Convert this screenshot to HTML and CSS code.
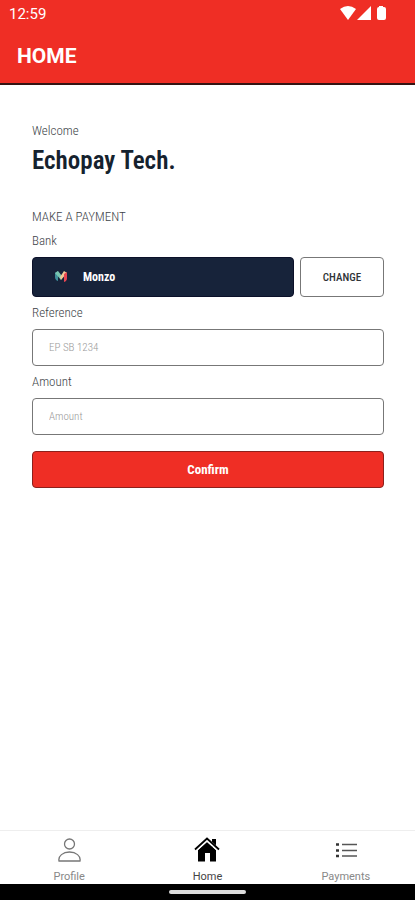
FILE: index.html
```html
<!DOCTYPE html>
<html lang="en">
<head>
<meta charset="utf-8">
<meta name="viewport" content="width=device-width, initial-scale=1">
<title>Home</title>
<link rel="stylesheet" href="styles.css">
</head>
<body>
<header class="header">
  <div class="status">
    <time>12:59</time>
    <svg class="status-icons" width="48" height="16" viewBox="0 0 48 16" fill="#fff" aria-hidden="true">
      <path d="M0 4Q8-2 16 4L8 15Z"/>
      <path d="M31 1V15H17Z"/>
      <path d="M39 1h4v1h1q2 0 2 2v9q0 2-2 2h-5q-2 0-2-2V4q0-2 2-2Z"/>
    </svg>
  </div>
  <h1 class="title">HOME</h1>
</header>
<main class="content">
  <p class="label">Welcome</p>
  <h2 class="name">Echopay Tech.</h2>
  <form class="form">
    <h3 class="label section">MAKE A PAYMENT</h3>
    <p class="label field-label">Bank</p>
    <div class="bank-row">
      <button type="button" class="bank">
        <svg width="14" height="12" viewBox="0 0 14 12" aria-hidden="true">
          <path d="M1 2L4 0V10Q1 9 1 6Z" fill="#3f8f9b"/>
          <path d="M1 2L4 0L8 5L7 9Z" fill="#79c6b0"/>
          <path d="M6 6L10 0L13 2L7 9Z" fill="#f3c997"/>
          <path d="M10 3L13 1V7Q13 10 10 11Z" fill="#e94652"/>
        </svg>
        <span>Monzo</span>
      </button>
      <button type="button" class="change">CHANGE</button>
    </div>
    <label class="label field-label" for="reference">Reference</label>
    <input class="input" id="reference" type="text" placeholder="EP SB 1234">
    <label class="label field-label" for="amount">Amount</label>
    <input class="input" id="amount" type="text" inputmode="decimal" placeholder="Amount">
    <button type="submit" class="confirm">Confirm</button>
  </form>
</main>
<nav class="tabs">
  <a class="tab" href="#profile">
    <svg width="24" height="26" viewBox="0 0 24 26" fill="none" stroke="#777" stroke-width="1.3" aria-hidden="true">
      <circle cx="12.500" cy="7" r="5"/>
      <path d="M2 24C1 19 6 15 12.500 15S24 19 23 24Z" stroke-linejoin="round"/>
    </svg>
    <span>Profile</span>
  </a>
  <a class="tab active" href="#home" aria-current="page">
    <svg width="26" height="26" viewBox="0 0 26 26" aria-hidden="true">
      <path d="M18 2h4v8h-4ZM4 13L13 5L22 13V24.500H16V16H11V24.500H4Z" fill="#000"/>
      <path d="M1 13.500L13 2.500L25 13.500" fill="none" stroke="#fff" stroke-width="3.500"/>
      <path d="M1 12.500L13 1.500L25 12.500" fill="none" stroke="#000" stroke-width="1.800"/>
    </svg>
    <span>Home</span>
  </a>
  <a class="tab" href="#payments">
    <svg width="24" height="26" viewBox="0 0 24 26" aria-hidden="true">
      <path d="M8 7.500h15M8 13.500h15M8 19h15" stroke="#555" stroke-width="1.300"/>
      <path d="M2 7.500h3M2 13.500h3M2 19h3" stroke="#333" stroke-width="2.600"/>
    </svg>
    <span>Payments</span>
  </a>
</nav>
<footer class="system"><div class="handle"></div></footer>
</body>
</html>
```
FILE: styles.css
```css
* { box-sizing: border-box; }
body {
  margin: 0;
  min-height: 100vh;
  display: flex;
  flex-direction: column;
  background: #fff;
  color: #3d4348;
  font-family: "Roboto Condensed", "Liberation Sans Narrow", Roboto, sans-serif;
}
h1, h2, h3, p { margin: 0; }
button, input { font: inherit; }
.header {
  background: #ef2e25;
  border-bottom: 2px solid #351413;
  color: #fff;
  font-family: Roboto, sans-serif;
}
.status {
  display: flex;
  justify-content: space-between;
  align-items: center;
  height: 28px;
  padding: 0 27px 0 9px;
  font-size: 15px;
}
.status-icons { margin-bottom: 2px; }
.title {
  padding: 2px 17px 0;
  font-size: 21px;
  line-height: 53px;
  font-weight: 700;
}
.content {
  flex: 1;
  padding: 36px 31px 0 32px;
}
.label {
  display: block;
  font-size: 13px;
  line-height: 20px;
  font-weight: 300;
}
.name {
  margin-bottom: 28px;
  font-size: 25px;
  line-height: 40px;
  font-weight: 600;
  color: #15222e;
}
.form {
  display: flex;
  flex-direction: column;
}
.section { line-height: 16px; }
.field-label { padding: 4px 0; line-height: 24px; }
.bank-row { display: flex; gap: 6px; }
.bank, .change, .input, .confirm {
  border: 1px solid #777;
  border-radius: 4px;
}
.bank {
  flex: 1;
  display: flex;
  align-items: center;
  gap: 15px;
  height: 40px;
  padding: 0 21px;
  background: #17233a;
  border-color: #0b1029;
  color: #fff;
  font-size: 12px;
  font-weight: 700;
}
.change {
  width: 84px;
  background: #fff;
  color: #303438;
  font-size: 11px;
  font-weight: 500;
}
.input {
  width: 100%;
  height: 37px;
  padding: 0 16px;
  background: #fff;
  font-size: 11px;
  font-weight: 300;
}
.input::placeholder { color: #999; opacity: 1; }
.confirm {
  height: 37px;
  margin-top: 16px;
  background: #ef2e25;
  border-color: #8c201c;
  color: #fff;
  font-size: 13px;
  font-weight: 700;
}
.tabs {
  display: flex;
  height: 54px;
  border-top: 1px solid #eee;
}
.tab {
  flex: 1;
  display: flex;
  flex-direction: column;
  align-items: center;
  gap: 7px;
  padding-top: 6px;
  color: #888;
  font-family: Roboto, sans-serif;
  font-size: 11px;
  line-height: 14px;
  text-decoration: none;
}
.tab svg { flex-shrink: 0; }
.active { color: #444; }
.system {
  display: flex;
  justify-content: center;
  align-items: center;
  height: 16px;
  background: #000;
}
.handle {
  width: 77px;
  height: 4px;
  border-radius: 2px;
  background: #ddd;
}
```
